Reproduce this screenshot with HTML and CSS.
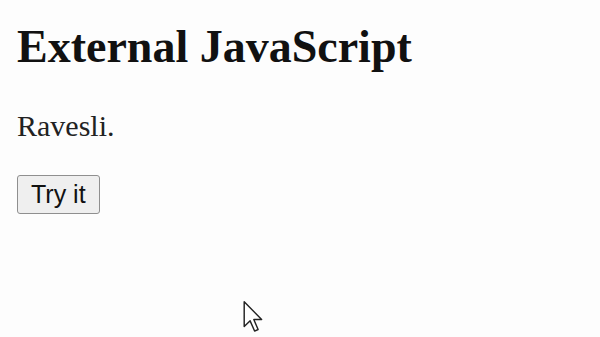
FILE: index.html
```html
<!DOCTYPE html>
<html lang="en">
<head>
    <meta charset="UTF-8">
    <meta name="viewport" content="width=device-width, initial-scale=1.0">
    <title>External JavaScript</title>
    <link rel="stylesheet" href="styles.css">
</head>
<body>
    <h1>External JavaScript</h1>

    <p id="demo">Ravesli.</p>

    <button type="button" onclick="myFunction()">Try it</button>

    <!-- mouse pointer from the recording -->
    <svg class="cursor" width="20" height="32" viewBox="0 0 12 20">
        <path d="M0.5 0.5 L0.5 16 L4.2 12.4 L7 18.8 L9.2 17.8 L6.5 11.6 L11.4 11.6 Z" fill="#fff" stroke="#222" stroke-width="0.9" stroke-linejoin="round"/>
    </svg>
</body>
</html>
```

FILE: styles.css
```css
body {
    font-family: "Liberation Serif", "Times New Roman", serif;
    background-color: #fdfdfd;
    color: #111;
    margin: 0;
    padding: 0 17px;
    height: 337px;
    overflow: hidden;
    position: relative;
}

h1 {
    font-size: 46px;
    margin: 20px 0 36px;
}

p {
    font-size: 30px;
    color: #222;
    margin: 0 0 32px;
}

button {
    font-family: "Liberation Sans", Arial, sans-serif;
    font-size: 25px;
    color: #111;
    height: 39px;
    padding: 0 13px;
    background-color: #efefef;
    border: 1px solid #8f8f8f;
    border-radius: 3px;
}

.cursor {
    position: absolute;
    left: 243px;
    top: 301px;
}
```
